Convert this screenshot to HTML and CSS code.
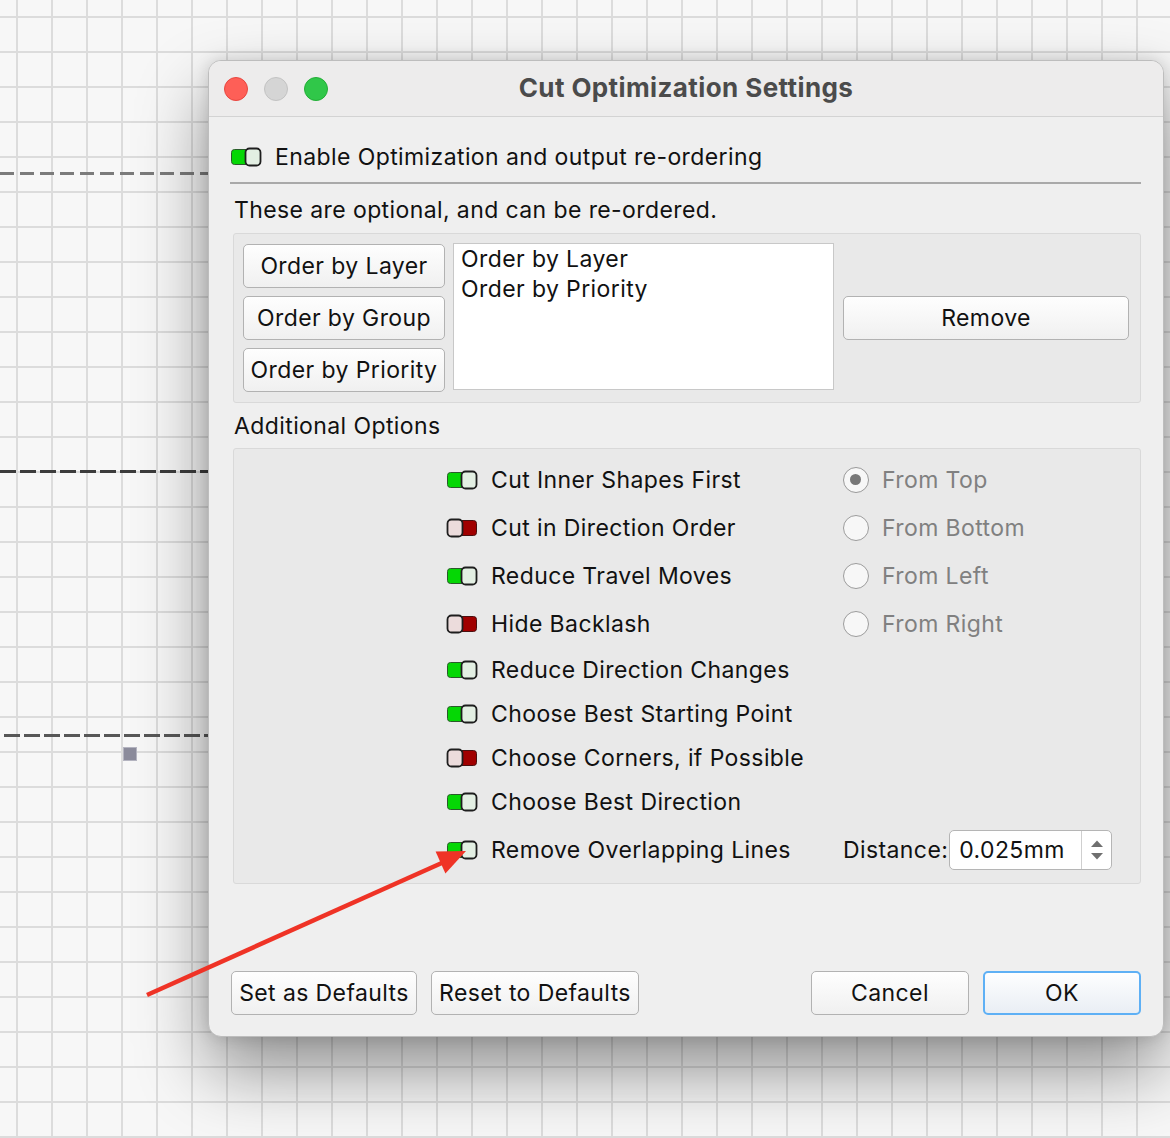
FILE: index.html
```html
<!DOCTYPE html>
<html>
<head>
<meta charset="utf-8">
<title>Cut Optimization Settings</title>
<link rel="stylesheet" href="styles.css">
</head>
<body>
<div class="desk">
  <div class="canvas-line line-a"></div>
  <div class="canvas-line line-b"></div>
  <div class="canvas-line line-c"></div>
  <div class="canvas-node"></div>

  <div class="dialog">
    <div class="titlebar">
      <div class="lights">
        <span class="light red"></span>
        <span class="light grey"></span>
        <span class="light green"></span>
      </div>
      <div class="title">Cut Optimization Settings</div>
      <div></div>
    </div>

    <div class="content">
      <div class="check-row enable-row">
        <svg class="toggle" viewBox="0 0 32 20" width="32" height="20"><rect x="1.5" y="2.5" width="18" height="15" rx="3" fill="#05d705" stroke="#2b5a2b" stroke-width="1"/><rect x="15.5" y="1.5" width="15" height="17" rx="4" fill="#e3efe3" stroke="#1e1e1e" stroke-width="1.8"/></svg>
        <span>Enable Optimization and output re-ordering</span>
      </div>
      <div class="separator"></div>
      <div class="label-line">These are optional, and can be re-ordered.</div>

      <div class="group group-order">
        <div class="order-buttons">
          <button class="btn order-btn">Order by Layer</button>
          <button class="btn order-btn">Order by Group</button>
          <button class="btn order-btn">Order by Priority</button>
        </div>
        <div class="list">
          <div class="list-item">Order by Layer</div>
          <div class="list-item">Order by Priority</div>
        </div>
        <button class="btn remove-btn">Remove</button>
      </div>

      <div class="label-line label-additional">Additional Options</div>

      <div class="group group-options">
        <div class="opt">
          <svg class="toggle" viewBox="0 0 32 20" width="32" height="20"><rect x="1.5" y="2.5" width="18" height="15" rx="3" fill="#05d705" stroke="#2b5a2b" stroke-width="1"/><rect x="15.5" y="1.5" width="15" height="17" rx="4" fill="#e3efe3" stroke="#1e1e1e" stroke-width="1.8"/></svg>
          <span>Cut Inner Shapes First</span>
        </div>
        <div class="radio-opt"><span class="radio checked"></span><span>From Top</span></div>

        <div class="opt">
          <svg class="toggle" viewBox="0 0 32 20" width="32" height="20"><rect x="12.5" y="2.5" width="18" height="15" rx="3" fill="#a00000" stroke="#4a1010" stroke-width="1"/><rect x="1.5" y="1.5" width="15" height="17" rx="4" fill="#ecdcdc" stroke="#1e1e1e" stroke-width="1.8"/></svg>
          <span>Cut in Direction Order</span>
        </div>
        <div class="radio-opt"><span class="radio"></span><span>From Bottom</span></div>

        <div class="opt">
          <svg class="toggle" viewBox="0 0 32 20" width="32" height="20"><rect x="1.5" y="2.5" width="18" height="15" rx="3" fill="#05d705" stroke="#2b5a2b" stroke-width="1"/><rect x="15.5" y="1.5" width="15" height="17" rx="4" fill="#e3efe3" stroke="#1e1e1e" stroke-width="1.8"/></svg>
          <span>Reduce Travel Moves</span>
        </div>
        <div class="radio-opt"><span class="radio"></span><span>From Left</span></div>

        <div class="opt">
          <svg class="toggle" viewBox="0 0 32 20" width="32" height="20"><rect x="12.5" y="2.5" width="18" height="15" rx="3" fill="#a00000" stroke="#4a1010" stroke-width="1"/><rect x="1.5" y="1.5" width="15" height="17" rx="4" fill="#ecdcdc" stroke="#1e1e1e" stroke-width="1.8"/></svg>
          <span>Hide Backlash</span>
        </div>
        <div class="radio-opt"><span class="radio"></span><span>From Right</span></div>

        <div class="opt">
          <svg class="toggle" viewBox="0 0 32 20" width="32" height="20"><rect x="1.5" y="2.5" width="18" height="15" rx="3" fill="#05d705" stroke="#2b5a2b" stroke-width="1"/><rect x="15.5" y="1.5" width="15" height="17" rx="4" fill="#e3efe3" stroke="#1e1e1e" stroke-width="1.8"/></svg>
          <span>Reduce Direction Changes</span>
        </div>
        <div></div>

        <div class="opt">
          <svg class="toggle" viewBox="0 0 32 20" width="32" height="20"><rect x="1.5" y="2.5" width="18" height="15" rx="3" fill="#05d705" stroke="#2b5a2b" stroke-width="1"/><rect x="15.5" y="1.5" width="15" height="17" rx="4" fill="#e3efe3" stroke="#1e1e1e" stroke-width="1.8"/></svg>
          <span>Choose Best Starting Point</span>
        </div>
        <div></div>

        <div class="opt">
          <svg class="toggle" viewBox="0 0 32 20" width="32" height="20"><rect x="12.5" y="2.5" width="18" height="15" rx="3" fill="#a00000" stroke="#4a1010" stroke-width="1"/><rect x="1.5" y="1.5" width="15" height="17" rx="4" fill="#ecdcdc" stroke="#1e1e1e" stroke-width="1.8"/></svg>
          <span>Choose Corners, if Possible</span>
        </div>
        <div></div>

        <div class="opt">
          <svg class="toggle" viewBox="0 0 32 20" width="32" height="20"><rect x="1.5" y="2.5" width="18" height="15" rx="3" fill="#05d705" stroke="#2b5a2b" stroke-width="1"/><rect x="15.5" y="1.5" width="15" height="17" rx="4" fill="#e3efe3" stroke="#1e1e1e" stroke-width="1.8"/></svg>
          <span>Choose Best Direction</span>
        </div>
        <div></div>

        <div class="opt">
          <svg class="toggle" viewBox="0 0 32 20" width="32" height="20"><rect x="1.5" y="2.5" width="18" height="15" rx="3" fill="#05d705" stroke="#2b5a2b" stroke-width="1"/><rect x="15.5" y="1.5" width="15" height="17" rx="4" fill="#e3efe3" stroke="#1e1e1e" stroke-width="1.8"/></svg>
          <span>Remove Overlapping Lines</span>
        </div>
        <div class="distance">
          <span class="distance-label">Distance:</span>
          <div class="spinbox">
            <span class="spin-value">0.025mm</span>
            <span class="spin-arrows">
              <svg viewBox="0 0 16 26" width="16" height="26"><path d="M2 10 L8 3.5 L14 10 Z" fill="#6f6f6f"/><path d="M2 16 L8 22.5 L14 16 Z" fill="#6f6f6f"/></svg>
            </span>
          </div>
        </div>
      </div>

      <div class="footer">
        <button class="btn foot-btn set-btn">Set as Defaults</button>
        <button class="btn foot-btn reset-btn">Reset to Defaults</button>
        <div class="footer-spacer"></div>
        <button class="btn foot-btn cancel-btn">Cancel</button>
        <button class="btn foot-btn ok-btn">OK</button>
      </div>
    </div>
  </div>

  <svg class="annotation" viewBox="0 0 1170 1138" width="1170" height="1138">
    <line x1="147" y1="995" x2="444" y2="862" stroke="#ef3326" stroke-width="4.5" stroke-linecap="butt"/>
    <polygon points="466,851 435.6,851.6 445.4,873.4" fill="#ef3326"/>
  </svg>
</div>
</body>
</html>
```
FILE: styles.css
```css
* { box-sizing: border-box; }

html, body {
  margin: 0;
  padding: 0;
}

body {
  font-family: Inter, "Liberation Sans", "DejaVu Sans", sans-serif;
  color: #111;
}

.desk {
  position: relative;
  width: 1170px;
  height: 1138px;
  overflow: hidden;
  padding: 60px 0 0 208px;
  background-color: #f7f7f7;
  background-image:
    linear-gradient(to right, #dcdcdc 2px, transparent 2px),
    linear-gradient(to bottom, #dcdcdc 2px, transparent 2px);
  background-size: 35px 35px;
  background-position: 16px 16px;
}

.canvas-line {
  position: absolute;
  left: 0;
  width: 215px;
  height: 3px;
}

.line-a {
  top: 172px;
  background: repeating-linear-gradient(to right, #7b7b7b 0 14px, transparent 14px 20px);
}

.line-b {
  top: 470px;
  background: repeating-linear-gradient(to right, #3c3c3c 0 16px, transparent 16px 20px);
}

.line-c {
  top: 734px;
  left: 4px;
  background: repeating-linear-gradient(to right, #575757 0 16px, transparent 16px 20px);
}

.canvas-node {
  position: absolute;
  left: 123px;
  top: 747px;
  width: 14px;
  height: 14px;
  background: #8b8b9b;
  border: 1px solid #b4b4c0;
}

.dialog {
  position: relative;
  z-index: 1;
  width: 956px;
  height: 977px;
  border: 1px solid #bdbdbd;
  border-radius: 13px;
  background: #efefef;
  box-shadow: 0 34px 70px rgba(0, 0, 0, 0.42), 0 0 16px rgba(0, 0, 0, 0.14);
  display: flex;
  flex-direction: column;
  overflow: hidden;
}

.titlebar {
  height: 56px;
  flex: none;
  border-bottom: 1px solid #d3d3d3;
  background: #edecec;
  display: grid;
  grid-template-columns: 1fr auto 1fr;
  align-items: center;
}

.lights {
  display: flex;
  gap: 16px;
  padding-left: 15px;
}

.light {
  width: 24px;
  height: 24px;
  border-radius: 50%;
  display: block;
}

.light.red { background: #fe5f57; border: 1px solid #e8463f; }
.light.grey { background: #d5d5d5; border: 1px solid #c3c3c3; }
.light.green { background: #30c749; border: 1px solid #22ae36; }

.title {
  font-size: 26px;
  font-weight: 700;
  color: #4b4b4b;
  letter-spacing: 0.4px;
  margin-top: -2px;
}

.content {
  flex: 1;
  display: flex;
  flex-direction: column;
  padding: 26px 22px 21px 21px;
  font-size: 23px;
  letter-spacing: 0.4px;
}

.check-row {
  display: flex;
  align-items: center;
  gap: 13px;
  height: 28px;
  line-height: 28px;
}

.toggle {
  flex: none;
  display: block;
}

.separator {
  margin-top: 11px;
  height: 0;
  border-top: 2px solid #a9a9a9;
}

.label-line {
  margin-top: 12px;
  margin-left: 4px;
  height: 28px;
  line-height: 28px;
}

.group {
  margin-left: 3px;
  border: 1px solid #d9d9d9;
  border-radius: 3px;
  background: #e9e9e9;
}

.group-order {
  margin-top: 9px;
  height: 170px;
  padding: 9px 11px 9px 9px;
  display: flex;
  align-items: center;
  gap: 8px;
}

.order-buttons {
  display: flex;
  flex-direction: column;
  gap: 8px;
  width: 202px;
  flex: none;
}

.btn {
  font-family: inherit;
  font-size: 23px;
  letter-spacing: 0.4px;
  color: #111;
  height: 44px;
  border: 1px solid #b2b2b2;
  border-radius: 5px;
  background: linear-gradient(#fefefe, #f0f0f0);
  padding: 0;
  margin: 0;
  text-align: center;
  white-space: nowrap;
}

.order-btn {
  width: 202px;
}

.list {
  width: 381px;
  height: 147px;
  flex: none;
  background: #fff;
  border: 1px solid #c8c8c8;
  padding: 0 7px;
  align-self: flex-start;
}

.list-item {
  height: 30px;
  line-height: 30px;
}

.remove-btn {
  width: 286px;
  margin-left: 1px;
  flex: none;
}

.label-additional {
  margin-top: 9px;
}

.group-options {
  margin-top: 8px;
  height: 436px;
  padding: 7px 0 0 212px;
  display: grid;
  grid-template-columns: 397px auto;
  grid-template-rows: 48px 48px 48px 48px 44px 44px 44px 44px 52px;
  align-items: center;
}

.opt {
  display: flex;
  align-items: center;
  gap: 13px;
}

.radio-opt {
  display: flex;
  align-items: center;
  gap: 13px;
  color: #808080;
}

.radio {
  width: 26px;
  height: 26px;
  border-radius: 50%;
  border: 1.6px solid #9c9c9c;
  background: #f7f7f7;
  position: relative;
  flex: none;
}

.radio.checked {
  border-color: #999;
}

.radio.checked::after {
  content: "";
  position: absolute;
  left: 6px;
  top: 6px;
  width: 11px;
  height: 11px;
  border-radius: 50%;
  background: #777;
}

.distance {
  display: flex;
  align-items: center;
  gap: 1px;
}

.spinbox {
  width: 163px;
  height: 40px;
  border: 1px solid #b5b5b5;
  border-radius: 5px;
  background: #fff;
  display: flex;
  align-items: stretch;
}

.spin-value {
  flex: 1;
  padding-left: 9px;
  line-height: 38px;
}

.spin-arrows {
  width: 30px;
  border-left: 1px solid #cfcfcf;
  display: flex;
  align-items: center;
  justify-content: center;
}

.spin-arrows svg { display: block; }

.footer {
  margin-top: auto;
  display: flex;
  gap: 14px;
  padding-left: 1px;
}

.footer-spacer { flex: 1; }

.set-btn { width: 186px; }
.reset-btn { width: 208px; }
.cancel-btn { width: 158px; }
.ok-btn {
  width: 158px;
  border: 2px solid #5eb0f5;
  background: linear-gradient(#fdfeff, #e9eef4);
}

.annotation {
  position: absolute;
  left: 0;
  top: 0;
  z-index: 2;
  pointer-events: none;
}
```
